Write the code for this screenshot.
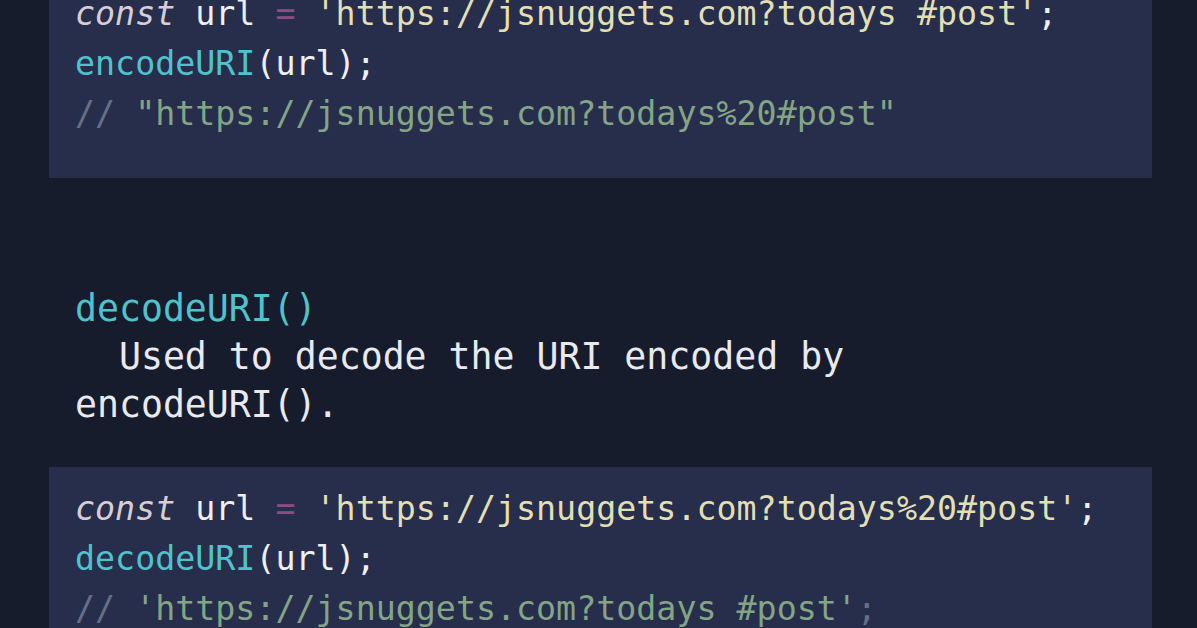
import React from "react";

const mono = { fontFamily: '"DejaVu Sans Mono", "Liberation Mono", monospace' };

function Block({ lines, className }) {
  return (
    <div className={`ml-[49px] w-[1103px] bg-[#272e4c] pl-[26px] ${className}`}>
      {lines.map((l, i) => (
        <div key={i} className="h-[50px] leading-[50px] text-[33.3px] whitespace-pre">
          {l}
        </div>
      ))}
    </div>
  );
}

const K = ({ children }) => <span className="italic text-[#d8cdd4]">{children}</span>;
const V = ({ children }) => <span className="text-[#eef0f4]">{children}</span>;
const O = ({ children }) => <span className="text-[#8c4d86]">{children}</span>;
const S = ({ children }) => <span className="text-[#e2dfb4]">{children}</span>;
const F = ({ children }) => <span className="text-[#4fc3cb]">{children}</span>;
const C = ({ children }) => <span className="text-[#647089]">{children}</span>;
const G = ({ children }) => <span className="text-[#83a585]">{children}</span>;

export default function App() {
  return (
    <div className="w-[1197px] h-[628px] overflow-hidden bg-[#171c2d]" style={mono}>
      <Block
        className="mt-[-28px] pt-[17px] pb-[39px]"
        lines={[
          <>
            <K>const</K> <V>url</V> <O>=</O> <S>'https://jsnuggets.com?todays #post'</S><V>;</V>
          </>,
          <>
            <F>encodeURI</F><V>(url);</V>
          </>,
          <>
            <C>// </C><G>"https://jsnuggets.com?todays%20#post"</G>
          </>,
        ]}
      />
      <div className="mt-[107px] pl-[75px] text-[36.5px] leading-[48px] text-[#e8eaef] whitespace-pre">
        <div className="text-[#4fc3cb]">decodeURI()</div>
        <div>  Used to decode the URI encoded by</div>
        <div>encodeURI().</div>
      </div>
      <Block
        className="mt-[38px] pt-[17px] pb-[40px]"
        lines={[
          <>
            <K>const</K> <V>url</V> <O>=</O> <S>'https://jsnuggets.com?todays%20#post'</S><V>;</V>
          </>,
          <>
            <F>decodeURI</F><V>(url);</V>
          </>,
          <>
            <C>// </C><G>'https://jsnuggets.com?todays #post'</G><C>;</C>
          </>,
        ]}
      />
    </div>
  );
}
